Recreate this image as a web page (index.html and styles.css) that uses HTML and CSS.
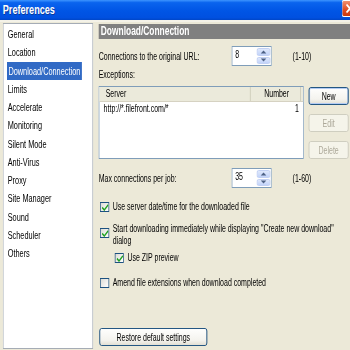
FILE: index.html
```html
<!DOCTYPE html>
<html lang="en">
<head>
    <meta charset="UTF-8">
    <title>Preferences</title>
    <link rel="stylesheet" href="styles.css">
</head>
<body>
    <div class="window">
        <div class="titlebar">
            <span class="title">Preferences</span>
            <span class="close">
                <svg width="23" height="15" viewBox="0 0 23 15"><path d="M6 3.5 L16 11.5 M16 3.5 L6 11.5" stroke="#fff" stroke-width="2.2"/></svg>
            </span>
        </div>
        <div class="content">
            <ul class="nav">
                <li>General</li>
                <li>Location</li>
                <li class="active"><span>Download/Connection</span></li>
                <li>Limits</li>
                <li>Accelerate</li>
                <li>Monitoring</li>
                <li>Silent Mode</li>
                <li>Anti-Virus</li>
                <li>Proxy</li>
                <li>Site Manager</li>
                <li>Sound</li>
                <li>Scheduler</li>
                <li>Others</li>
            </ul>

            <div class="page">
                <div class="page-title">Download/Connection</div>

                <div class="field-row conn-row">
                    <span class="field-label">Connections to the original URL:</span>
                    <div class="spin">
                        <span class="spin-value">8</span>
                        <span class="spin-btns">
                            <span class="spin-btn"><svg width="9" height="4" viewBox="0 0 9 4"><path d="M0.5 3.5 L4.5 0.5 L8.5 3.5 Z" fill="#4d6185"/></svg></span>
                            <span class="spin-btn"><svg width="9" height="4" viewBox="0 0 9 4"><path d="M0.5 0.5 L4.5 3.5 L8.5 0.5 Z" fill="#4d6185"/></svg></span>
                        </span>
                    </div>
                    <span class="range">(1-10)</span>
                </div>

                <div class="caption">Exceptions:</div>

                <div class="exceptions">
                    <div class="list">
                        <div class="list-head">
                            <span class="col-server">Server</span>
                            <span class="col-number">Number</span>
                        </div>
                        <div class="list-row">
                            <span class="col-server">http://*.filefront.com/*</span>
                            <span class="col-number">1</span>
                        </div>
                    </div>
                    <div class="side-buttons">
                        <button class="btn btn-default">New</button>
                        <button class="btn" disabled>Edit</button>
                        <button class="btn" disabled>Delete</button>
                    </div>
                </div>

                <div class="field-row max-row">
                    <span class="field-label">Max connections per job:</span>
                    <div class="spin">
                        <span class="spin-value">35</span>
                        <span class="spin-btns">
                            <span class="spin-btn"><svg width="9" height="4" viewBox="0 0 9 4"><path d="M0.5 3.5 L4.5 0.5 L8.5 3.5 Z" fill="#4d6185"/></svg></span>
                            <span class="spin-btn"><svg width="9" height="4" viewBox="0 0 9 4"><path d="M0.5 0.5 L4.5 3.5 L8.5 0.5 Z" fill="#4d6185"/></svg></span>
                        </span>
                    </div>
                    <span class="range">(1-60)</span>
                </div>

                <div class="check check-date">
                    <span class="box"><svg width="10" height="7" viewBox="0 0 10 7"><path d="M1 3.5 L4 6 L9.5 0.8" fill="none" stroke="#21a121" stroke-width="1.7"/></svg></span>
                    <span class="check-text">Use server date/time for the downloaded file</span>
                </div>

                <div class="check check-start">
                    <span class="box"><svg width="10" height="7" viewBox="0 0 10 7"><path d="M1 3.5 L4 6 L9.5 0.8" fill="none" stroke="#21a121" stroke-width="1.7"/></svg></span>
                    <span class="check-text">Start downloading immediately while displaying "Create new download" dialog</span>
                </div>

                <div class="check check-zip">
                    <span class="box"><svg width="10" height="7" viewBox="0 0 10 7"><path d="M1 3.5 L4 6 L9.5 0.8" fill="none" stroke="#21a121" stroke-width="1.7"/></svg></span>
                    <span class="check-text">Use ZIP preview</span>
                </div>

                <div class="check check-amend">
                    <span class="box"></span>
                    <span class="check-text">Amend file extensions when download completed</span>
                </div>

                <button class="btn btn-restore">Restore default settings</button>
            </div>
        </div>
    </div>
</body>
</html>
```

FILE: styles.css
```css
* {
    margin: 0;
    padding: 0;
    box-sizing: border-box;
}

html {
    overflow: hidden;
}

body {
    width: 350px;
    height: 350px;
    overflow: hidden;
    background-color: #ece9d8;
    font-family: "Liberation Sans", Arial, sans-serif;
    font-size: 10px;
    color: #000;
}

/* the old dialog used a narrow font: lay out wide, then squeeze horizontally */
.window {
    width: 500px;
    height: 350px;
    overflow: hidden;
    transform: scaleX(0.7);
    transform-origin: left top;
}

.titlebar {
    height: 22px;
    background: linear-gradient(to bottom, #3d95ff 0%, #0a64ee 12%, #0055e5 50%, #0050e0 80%, #0046c8 91%, #f4f2e8 91%);
    display: flex;
    align-items: flex-start;
    justify-content: space-between;
}

.title {
    color: #fff;
    font-weight: bold;
    font-size: 13px;
    line-height: 19px;
    padding-left: 4px;
    text-shadow: 1px 1px 0 #0a3a9a;
}

.close {
    width: 12px;
    height: 17px;
    overflow: hidden;
    background: linear-gradient(to bottom, #f09070, #e04a20 60%, #c83a10);
    border: 1px solid #fff;
    border-right: none;
    border-radius: 3px 0 0 3px;
}

.close svg {
    display: block;
}

.content {
    display: flex;
    padding: 1px 0 0 4px;
}

.nav {
    flex: none;
    list-style: none;
    width: 129px;
    height: 326px;
    background-color: #fff;
    border: 1px solid #a5acb5;
    padding-top: 1px;
    font-size: 10.5px;
}

.nav li {
    height: 18.25px;
    line-height: 18.25px;
    padding-left: 6px;
    white-space: nowrap;
}

.nav li.active span {
    display: inline-block;
    background-color: #316ac5;
    color: #fff;
    padding: 0 2px;
    margin-left: -1px;
    height: 18px;
}

.page {
    flex: 1;
    min-width: 0;
    margin-left: 8px;
    display: flex;
    flex-direction: column;
    align-items: flex-start;
}

.page-title {
    align-self: stretch;
    height: 15px;
    margin-top: 1px;
    background-color: #808080;
    color: #fff;
    font-weight: bold;
    font-size: 12px;
    line-height: 15px;
    padding-left: 3px;
}

.field-row {
    display: flex;
    align-items: center;
    height: 20px;
}

.conn-row {
    margin-top: 7px;
}

.max-row {
    margin-top: 9px;
}

.field-label {
    width: 190px;
    white-space: nowrap;
}

.spin {
    width: 57px;
    height: 20px;
    border: 1px solid #7f9db9;
    background-color: #fff;
    display: flex;
    justify-content: space-between;
}

.spin-value {
    padding-left: 4px;
    line-height: 15px;
}

.spin-btns {
    display: flex;
    flex-direction: column;
    gap: 1px;
    padding: 1px;
}

.spin-btn {
    width: 19px;
    flex: 1;
    background: linear-gradient(to bottom, #dfe8fc, #c2d3f9);
    border: 1px solid #b8c9f2;
    border-radius: 2px;
    display: flex;
    align-items: center;
    justify-content: center;
}

.range {
    margin-left: 30px;
}

.caption {
    height: 14px;
    line-height: 14px;
    margin-top: 2px;
}

.exceptions {
    display: flex;
    margin-top: 4px;
}

.list {
    width: 293px;
    height: 73px;
    background-color: #fff;
    border: 1px solid #7f9db9;
}

.list-head {
    display: flex;
    height: 15px;
    line-height: 14px;
    background-color: #ebeadb;
    border-bottom: 1px solid #d6d2c2;
}

.list-head .col-server,
.list-head .col-number {
    border-right: 1px solid #c7c5b2;
}

.col-server {
    width: 216px;
    padding-left: 9px;
}

.col-number {
    width: 72px;
    text-align: right;
    padding-right: 16px;
}

.list-row {
    display: flex;
    height: 13px;
    line-height: 13px;
}

.list-row .col-server {
    padding-left: 6px;
}

.list-row .col-number {
    padding-right: 3px;
}

.side-buttons {
    display: flex;
    flex-direction: column;
    gap: 9px;
    margin-left: 7px;
    margin-top: 1px;
}

.btn {
    font-family: inherit;
    font-size: 10px;
    color: #000;
    width: 57px;
    height: 18px;
    background: linear-gradient(to bottom, #fefefd, #f4f3ee 70%, #e2dfd4);
    border: 1px solid #003c74;
    border-radius: 3px;
}

.btn-default {
    box-shadow: inset 0 0 0 1px #b3cbf3;
}

.btn:disabled {
    background: #f5f4ea;
    border-color: #c9c7ba;
    color: #aca899;
}

.check {
    display: flex;
    align-items: center;
    gap: 5px;
    margin-left: 2px;
    height: 12px;
    line-height: 12px;
}

.box {
    flex: none;
    width: 13px;
    height: 10px;
    border: 1px solid #1c5180;
    background: linear-gradient(135deg, #dcdcd6, #fff);
    display: flex;
    align-items: center;
    justify-content: center;
}

.check-date {
    margin-top: 13px;
}

.check-start {
    margin-top: 10px;
    height: 24px;
    align-items: flex-start;
    width: 335px;
}

.check-start .box {
    margin-top: 5px;
}

.check-zip {
    margin-top: 5px;
    margin-left: 23px;
}

.check-amend {
    margin-top: 13px;
}

.btn-restore {
    width: 154px;
    margin-top: 39px;
    margin-left: 1px;
}
```
